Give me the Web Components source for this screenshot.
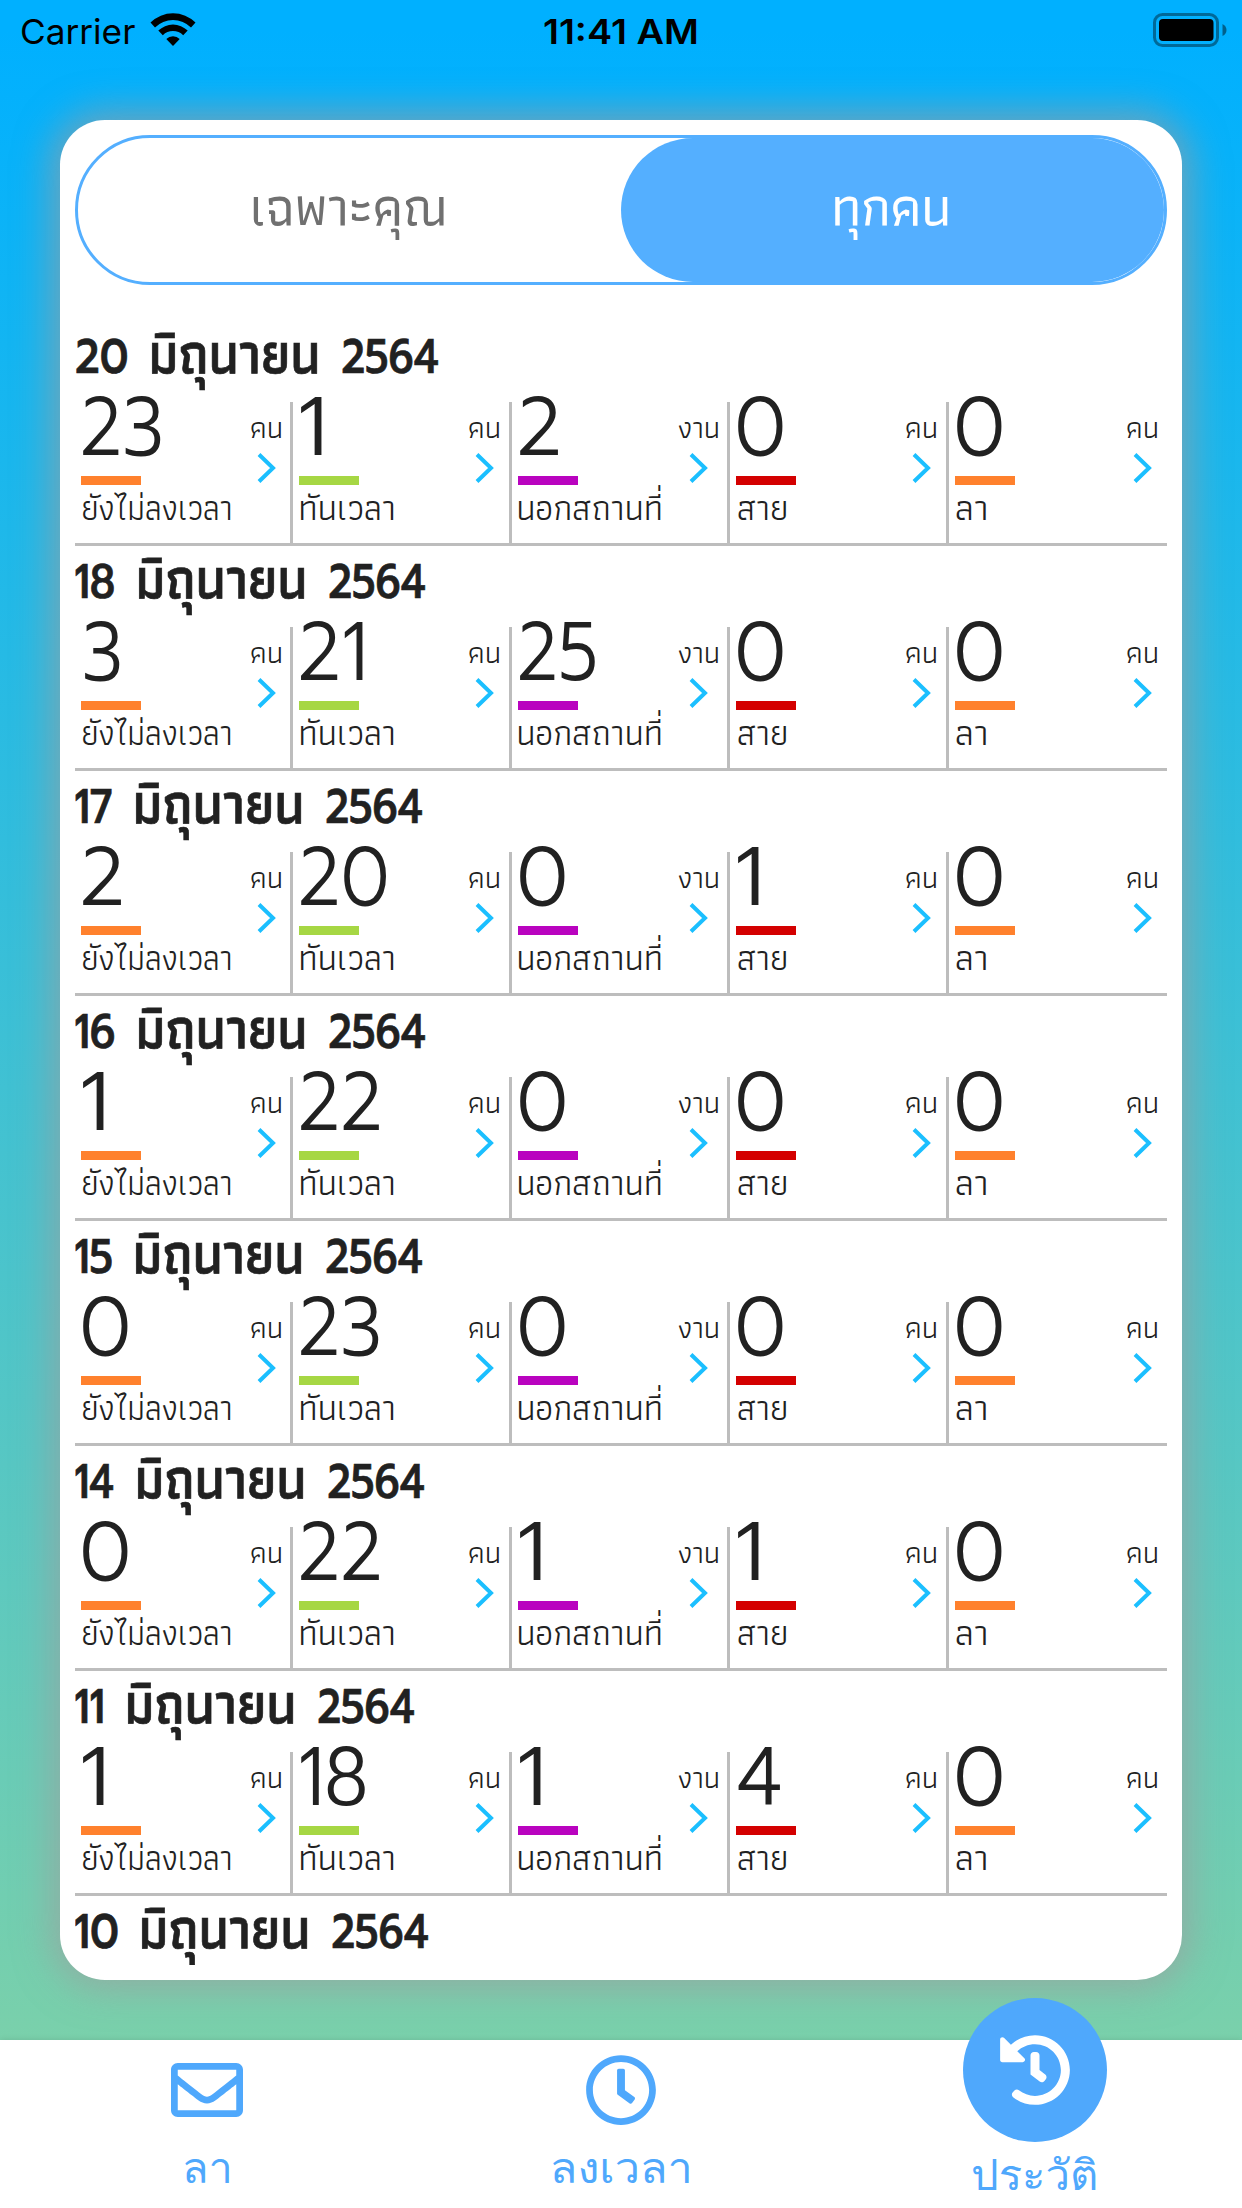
<!DOCTYPE html>
<html lang="th">
<head>
<meta charset="utf-8">
<title>ประวัติ</title>
<style>
html, body { margin: 0; width: 1242px; height: 2208px; overflow: hidden; font-family: Athiti, "Noto Sans Thai", sans-serif; }
</style>
</head>
<body>
<leave-app></leave-app>
<script>
const define = (name, css, html, setup) => {
  customElements.define(name, class extends HTMLElement {
    connectedCallback() {
      if (this.shadowRoot) return;
      const root = this.attachShadow({ mode: 'open' });
      const body = typeof html === 'function' ? html(this) : html;
      root.innerHTML = `<style>${css}</style>${body}`;
      if (setup) setup(this, root);
    }
  });
};

/* A line of text whose visible glyphs fill a box: w = ink width, h = height of the sample glyph, baseline at the box bottom. */
const pen = document.createElement('canvas').getContext('2d');
define('ink-text', `
  :host { display: block; flex: none; overflow: visible; }
  span { display: block; width: max-content; white-space: pre; transform-origin: 0 0; }
`, el => `<span></span>`, (el, root) => {
  const text = el.getAttribute('text'), family = el.getAttribute('font') || 'Athiti';
  const weight = el.getAttribute('weight') || 400;
  const w = +el.getAttribute('w'), h = +el.getAttribute('h');
  const font = size => `${weight} ${size}px "${family}", sans-serif`;
  pen.font = font(100);
  const size = h / pen.measureText(el.getAttribute('sample') || 'น').actualBoundingBoxAscent * 100;
  pen.font = font(size);
  const m = pen.measureText(text);
  const scale = w / (m.actualBoundingBoxRight + m.actualBoundingBoxLeft);
  const baseline = h / 2 + (m.fontBoundingBoxAscent - m.fontBoundingBoxDescent) / 2;
  const span = root.querySelector('span');
  span.textContent = text;
  span.style.font = font(size);
  span.style.lineHeight = h + 'px';
  span.style.transform = `translate(${m.actualBoundingBoxLeft * scale}px, ${h - baseline}px) scaleX(${scale})`;
  el.style.width = w + 'px';
  el.style.height = h + 'px';
});

define('status-bar', `
  :host { display: grid; grid-template-columns: 1fr auto 1fr; height: 60px; flex: none; color: #000; }
  .left { display: flex; padding: 13px 0 0 22px; gap: 14px; }
  .left ink-text { margin-top: 6px; }
  .time { margin: 19px 1px 0 0; }
  .right { display: flex; justify-content: flex-end; padding: 13px 15px 0 0; }
  svg { display: block; flex: none; }
`, `
  <div class="left">
    <ink-text text="Carrier" font="Inter" sample="H" h="25" w="113.500"></ink-text>
    <svg width="46" height="33" viewBox="0 0 46 33">
      <path d="M0.500 9.600A32 32 0 0 1 45.500 9.600L41 14.400A25.500 25.500 0 0 0 5 14.400Z"/>
      <path d="M8.300 17.600A21 21 0 0 1 37.700 17.600L33.200 22.300A14.500 14.500 0 0 0 12.800 22.300Z"/>
      <path d="M16.300 26A9.800 9.800 0 0 1 29.700 26L23 33Z"/>
    </svg>
  </div>
  <ink-text class="time" text="11:41 AM" font="Inter" weight="600" sample="H" h="25" w="153"></ink-text>
  <div class="right">
    <svg width="74" height="34" viewBox="0 0 74 34">
      <rect x="1.500" y="1.500" width="63" height="31" rx="8" fill="none" stroke="#000" stroke-opacity=".4" stroke-width="3"/>
      <rect x="6" y="6" width="54.500" height="22" rx="4"/>
      <path d="M69.500 11Q73.500 13 73.500 17T69.500 23Z" fill-opacity=".45"/>
    </svg>
  </div>
`);

define('segment-tabs', `
  :host { display: flex; box-sizing: border-box; height: 150px; flex: none; border: 3px solid #54afff; border-radius: 75px; background: #fff; }
  div { flex: 1; display: flex; justify-content: center; padding: 57.500px 1.500px 0 0; box-sizing: border-box; color: #707070; }
  .on { background: #54afff; color: #fff; border-radius: 72px; }
`, `
  <div><ink-text text="เฉพาะคุณ" weight="500" h="29" w="191"></ink-text></div>
  <div class="on"><ink-text text="ทุกคน" weight="500" h="29" w="113"></ink-text></div>
`);

const numberInk = { 0: 44.5, 1: 21, 2: 38, 3: 35, 4: 42, 18: 64.5, 20: 85, 21: 62, 22: 78, 23: 78, 25: 75 };
define('stat-cell', `
  :host { display: flex; justify-content: space-between; flex: 0 0 20%; min-width: 0; box-sizing: border-box; border-right: 3px solid #bdbdbd; padding: 0 9px 0 6px; height: 144px; }
  :host(:last-child) { border-right-color: transparent; padding-right: 6px; }
  .main, .side { display: flex; flex-direction: column; }
  .main { width: 0; }
  .num { margin: -6.300px 0 0 2px; }
  :host([value="3"]) .num { margin-left: 4px; }
  .bar { width: 60px; height: 9px; margin: 20.800px 0 16px; background: var(--bar); }
  .label { margin-left: 1.500px; }
  .side { align-items: center; padding: 20px .5px 0 0; }
  svg { display: block; margin-top: 15px; }
`, el => {
  const n = el.getAttribute('value'), unit = el.getAttribute('unit');
  return `
  <div class="main">
    <ink-text class="num" text="${n}" font="Prompt" weight="300" sample="1" h="59" w="${numberInk[n]}"></ink-text>
    <div class="bar"></div>
    <ink-text class="label" text="${el.getAttribute('label')}" weight="400" h="19" w="${el.getAttribute('label-w')}"></ink-text>
  </div>
  <div class="side">
    <ink-text text="${unit}" weight="400" h="16" w="${unit === 'คน' ? 30 : 40}"></ink-text>
    <svg width="20" height="30" viewBox="0 0 20 30"><path d="M3 1.500L17 15L3 28.500" fill="none" stroke="#1bbfff" stroke-width="4"/></svg>
  </div>`;
});

const columns = [
  ['ยังไม่ลงเวลา', 147.5, 'คน', '#ff812d'],
  ['ทันเวลา', 92.5, 'คน', '#a6d744'],
  ['นอกสถานที่', 142, 'งาน', '#b903bf'],
  ['สาย', 48, 'คน', '#d40000'],
  ['ลา', 30, 'คน', '#ff812d']
];
define('day-record', `
  :host { display: block; flex: none; height: 225px; box-sizing: border-box; border-bottom: 3px solid #bdbdbd; color: #212121; }
  .date { display: flex; height: 81px; box-sizing: border-box; padding: 17.700px 0 0 var(--indent, 0px); gap: 24.500px; -webkit-text-stroke: .7px #212121; }
  .month { margin-top: 4px; }
  .cells { display: flex; }
`, el => {
  const values = (el.getAttribute('values') || '').split(' ').filter(Boolean);
  return `
  <div class="date">
    <ink-text text="${el.getAttribute('day')}" font="Prompt" weight="500" sample="1" h="34" w="${el.getAttribute('day-w')}"></ink-text>
    <ink-text class="month" text="มิถุนายน" weight="600" h="30" w="165.500"></ink-text>
    <ink-text text="2564" font="Prompt" weight="500" sample="1" h="34" w="96.500"></ink-text>
  </div>
  <div class="cells">${values.map((v, i) => `<stat-cell value="${v}" label="${columns[i][0]}" label-w="${columns[i][1]}" unit="${columns[i][2]}" style="--bar:${columns[i][3]}"></stat-cell>`).join('')}</div>`;
});

define('history-card', `
  :host { display: flex; flex-direction: column; box-sizing: border-box; width: 1122px; height: 1860px; margin: 60px auto 0; padding: 15px; border-radius: 45px; background: #fff; box-shadow: 0 0 36px 9px rgba(158,158,158,.68); flex: none; }
  .list { display: flex; flex-direction: column; margin-top: 36px; flex: 1; min-height: 0; overflow: hidden; }
`, `<segment-tabs></segment-tabs><div class="list"><slot></slot></div>`);

const icons = {
  mail: 'M464 64H48C21.490 64 0 85.490 0 112v288c0 26.510 21.490 48 48 48h416c26.510 0 48-21.490 48-48V112c0-26.510-21.490-48-48-48zm0 48v40.805c-22.422 18.259-58.168 46.651-134.587 106.490-16.841 13.247-50.201 45.072-73.413 44.701-23.208.375-56.579-31.459-73.413-44.701C106.180 199.465 70.425 171.067 48 152.805V112h416zM48 400V214.398c22.914 18.251 55.409 43.862 104.938 82.646 21.857 17.205 60.134 55.186 103.062 54.955 42.717.231 80.509-37.199 103.053-54.947 49.528-38.783 82.032-64.401 104.947-82.653V400H48z',
  clock: 'M256 8C119 8 8 119 8 256s111 248 248 248 248-111 248-248S393 8 256 8zm0 448c-110.500 0-200-89.500-200-200S145.500 56 256 56s200 89.500 200 200-89.500 200-200 200zm61.800-104.400l-84.900-61.700c-3.100-2.300-4.900-5.900-4.900-9.700V116c0-6.600 5.400-12 12-12h32c6.600 0 12 5.400 12 12v141.700l66.800 48.600c5.400 3.900 6.500 11.400 2.600 16.800L334.600 349c-3.900 5.300-11.400 6.500-16.800 2.600z',
  history: 'M504 255.531c.253 136.640-111.180 248.372-247.820 248.468-59.015.042-113.223-20.530-155.822-54.911-11.077-8.940-11.905-25.541-1.839-35.607l11.267-11.267c8.609-8.609 22.353-9.551 31.891-1.984C173.062 425.135 212.781 440 256 440c101.705 0 184-82.311 184-184 0-101.705-82.311-184-184-184-48.814 0-93.149 18.969-126.068 49.932l50.754 50.754c10.080 10.080 2.941 27.314-11.313 27.314H24c-8.837 0-16-7.163-16-16V38.627c0-14.254 17.234-21.393 27.314-11.314l49.372 49.372C129.209 34.136 189.552 8 256 8c136.810 0 247.747 110.780 248 247.531zm-180.912 78.784l9.823-12.630c8.138-10.463 6.253-25.542-4.210-33.679L288 256.349V152c0-13.255-10.745-24-24-24h-16c-13.255 0-24 10.745-24 24v135.651l65.409 50.874c10.463 8.137 25.541 6.253 33.679-4.210z'
};
define('nav-item', `
  :host { flex: 1; display: flex; flex-direction: column; align-items: center; color: #4fa8fc; }
  .icon { margin-top: 14px; height: 72px; }
  svg { display: block; width: 72px; height: 72px; fill: currentColor; }
  ink-text { margin: 33px 1px 0 0; }
  :host([active]) .icon { box-sizing: border-box; margin-top: -42px; width: 144px; height: 144px; padding: 36px; border-radius: 50%; background: #4fa8fc; }
  :host([active]) svg { fill: #fff; }
  :host([active]) ink-text { margin: 23.500px 2px 0 0; }
`, el => `
  <div class="icon"><svg viewBox="0 0 512 512"><path d="${icons[el.getAttribute('icon')]}"/></svg></div>
  <ink-text text="${el.getAttribute('label')}" font="Loma" h="24" w="${el.getAttribute('label-w')}"></ink-text>`);

define('bottom-nav', `
  :host { display: flex; height: 168px; flex: none; margin-top: auto; background: #fff; box-shadow: 0 0 6px rgba(0,0,0,.12); }
`, `
  <nav-item icon="mail" label="ลา" label-w="44"></nav-item>
  <nav-item icon="clock" label="ลงเวลา" label-w="136"></nav-item>
  <nav-item active icon="history" label="ประวัติ" label-w="123"></nav-item>
`);

define('leave-app', `
  :host { display: flex; flex-direction: column; width: 1242px; height: 2208px; background: linear-gradient(#00b0ff 0, #00b0ff 30px, #84d3a4 100%); overflow: hidden; }
  day-record:first-child { --indent: 1px; }
`, () => {
  const days = [
    ['20', 51, '23 1 2 0 0'], ['18', 39, '3 21 25 0 0'], ['17', 36.5, '2 20 0 1 0'], ['16', 39, '1 22 0 0 0'],
    ['15', 36.5, '0 23 0 0 0'], ['14', 38.5, '0 22 1 1 0'], ['11', 28, '1 18 1 4 0'], ['10', 42.5, '']
  ];
  return `<status-bar></status-bar><history-card>${days.map((d, i) => `<day-record day="${d[0]}" day-w="${d[1]}" values="${d[2]}"></day-record>`).join('')}</history-card><bottom-nav></bottom-nav>`;
});
</script>
</body>
</html>
